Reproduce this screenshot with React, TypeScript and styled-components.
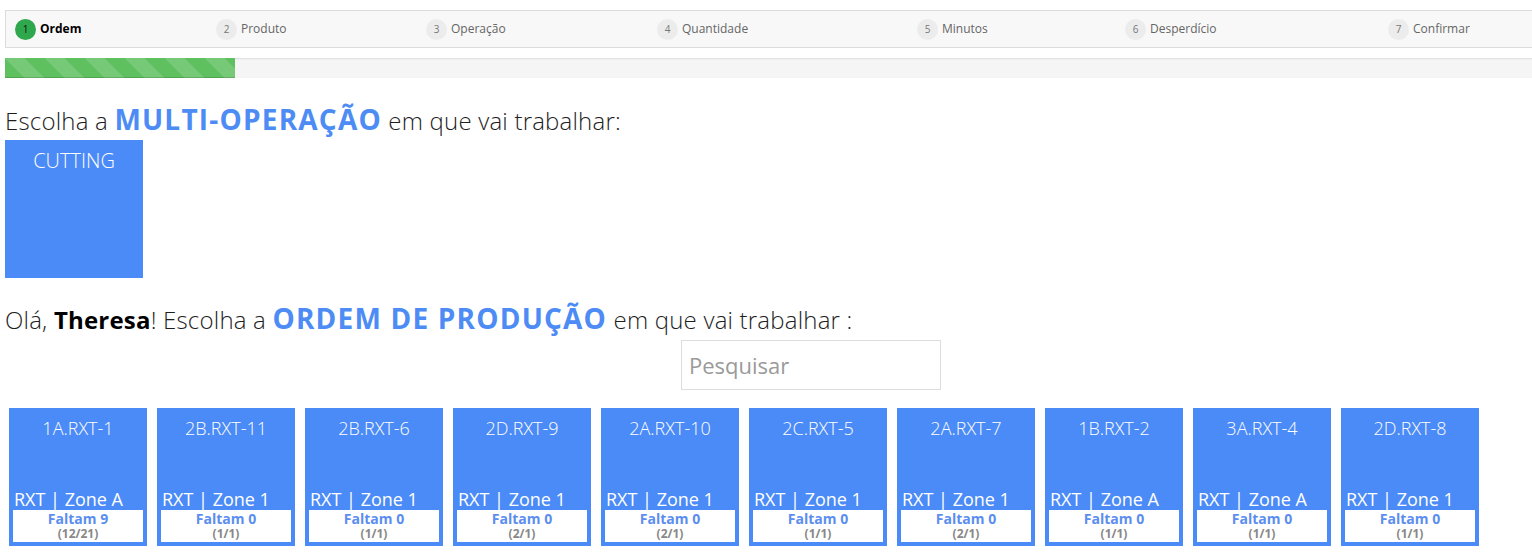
import React from "react";
import styled, { createGlobalStyle } from "styled-components";

const Global = createGlobalStyle`
  html, body {
    margin: 0;
    padding: 0;
    background: #fff;
    overflow: hidden;
  }
  body {
    font-family: "Open Sans", "Liberation Sans", sans-serif;
    color: #222;
  }
  * { box-sizing: border-box; }
`;

const Page = styled.div`
  padding: 10px 0 0 5px;
  width: 1532px;
`;

const StepBar = styled.div`
  width: 1540px;
  height: 38px;
  background: #f8f8f8;
  border: 1px solid #dcdcdc;
  border-right: none;
  display: grid;
  grid-template-columns: 201px 210px 231px 260px 208px 263px 1fr;
  align-items: center;
  padding-left: 9px;
`;

const Step = styled.div`
  display: flex;
  align-items: center;
  gap: 4px;
`;

const StepNum = styled.span<{ $active?: boolean }>`
  width: 21px;
  height: 21px;
  border-radius: 50%;
  display: flex;
  align-items: center;
  justify-content: center;
  font-size: 10px;
  background: ${(p) => (p.$active ? "#2fa84d" : "#ececec")};
  color: ${(p) => (p.$active ? "#111" : "#777")};
`;

const StepLabel = styled.span<{ $active?: boolean }>`
  font-size: 12px;
  margin-top: -1px;
  color: ${(p) => (p.$active ? "#000" : "#666")};
  font-weight: ${(p) => (p.$active ? 700 : 400)};
`;

const Progress = styled.div`
  margin-top: 10px;
  height: 20px;
  width: 1540px;
  background: #f5f5f5;
  box-shadow: inset 0 1px 2px rgba(0, 0, 0, 0.1);
`;

const ProgressFill = styled.div`
  height: 100%;
  background-color: #5ec05e;
  background-image: linear-gradient(
    45deg,
    rgba(255, 255, 255, 0.15) 25%,
    transparent 25%,
    transparent 50%,
    rgba(255, 255, 255, 0.15) 50%,
    rgba(255, 255, 255, 0.15) 75%,
    transparent 75%,
    transparent
  );
  background-size: 40px 40px;
  box-shadow: inset 0 -1px 0 rgba(0, 0, 0, 0.15);
`;

const Heading = styled.h3<{ $top: number; $bottom: number }>`
  margin: ${(p) => p.$top}px 0 ${(p) => p.$bottom}px;
  font-size: 24px;
  font-weight: 300;
  line-height: 30px;
  height: 30px;
  letter-spacing: 0.2px;
  color: #1e1e1e;
  white-space: nowrap;
`;

const Accent = styled.span`
  font-weight: 700;
  color: #4d8bf5;
  font-size: 28px;
  letter-spacing: 1.2px;
  line-height: 1;
`;

const Name = styled.span`
  font-weight: 700;
  color: #000;
`;

const Tile = styled.button`
  width: 138px;
  height: 138px;
  border: none;
  margin: 0;
  background: #4b8bf7;
  color: #fff;
  font-family: inherit;
  font-size: 20px;
  font-weight: 300;
  line-height: 28px;
  padding: 7px 0 0;
  display: flex;
  justify-content: center;
  align-items: flex-start;
`;

const SearchRow = styled.div`
  padding-left: 676px;
`;

const Search = styled.input`
  display: block;
  width: 260px;
  height: 50px;
  border: 1px solid #dddddd;
  padding: 0 7px;
  font-family: inherit;
  font-size: 22px;
  color: #333;
  outline: none;
  &::placeholder {
    color: #9a9a9a;
  }
`;

const Cards = styled.div`
  margin-top: 18px;
  padding-left: 4px;
  display: flex;
  gap: 10px;
`;

const Card = styled.div`
  width: 138px;
  height: 138px;
  padding: 4px;
  background: #4b8bf7;
  color: #fff;
  display: flex;
  flex-direction: column;
`;

const CardTitle = styled.div`
  margin-top: 4px;
  font-size: 18px;
  font-weight: 300;
  line-height: 24px;
  text-align: center;
`;

const Spacer = styled.div`
  flex: 1;
`;

const Zone = styled.div`
  font-size: 18px;
  line-height: 22px;
  padding-left: 1px;
  white-space: nowrap;
`;

const Count = styled.div`
  background: #fff;
  height: 32px;
  padding-top: 1px;
  text-align: center;
`;

const Faltam = styled.div`
  font-size: 14px;
  font-weight: 700;
  line-height: 16px;
  color: #5b8ef0;
`;

const Ratio = styled.div`
  font-size: 12px;
  font-weight: 700;
  line-height: 13px;
  color: #888;
`;

const steps = [
  "Ordem",
  "Produto",
  "Operação",
  "Quantidade",
  "Minutos",
  "Desperdício",
  "Confirmar",
];

const orders = [
  { code: "1A.RXT-1", zone: "RXT | Zone A", left: 9, ratio: "12/21" },
  { code: "2B.RXT-11", zone: "RXT | Zone 1", left: 0, ratio: "1/1" },
  { code: "2B.RXT-6", zone: "RXT | Zone 1", left: 0, ratio: "1/1" },
  { code: "2D.RXT-9", zone: "RXT | Zone 1", left: 0, ratio: "2/1" },
  { code: "2A.RXT-10", zone: "RXT | Zone 1", left: 0, ratio: "2/1" },
  { code: "2C.RXT-5", zone: "RXT | Zone 1", left: 0, ratio: "1/1" },
  { code: "2A.RXT-7", zone: "RXT | Zone 1", left: 0, ratio: "2/1" },
  { code: "1B.RXT-2", zone: "RXT | Zone A", left: 0, ratio: "1/1" },
  { code: "3A.RXT-4", zone: "RXT | Zone A", left: 0, ratio: "1/1" },
  { code: "2D.RXT-8", zone: "RXT | Zone 1", left: 0, ratio: "1/1" },
];

export default function App() {
  return (
    <Page>
      <Global />
      <StepBar>
        {steps.map((s, i) => (
          <Step key={s}>
            <StepNum $active={i === 0}>{i + 1}</StepNum>
            <StepLabel $active={i === 0}>{s}</StepLabel>
          </Step>
        ))}
      </StepBar>
      <Progress>
        <ProgressFill style={{ width: "230px" }} />
      </Progress>

      <Heading $top={27} $bottom={5}>
        Escolha a <Accent>MULTI-OPERAÇÃO</Accent> em que vai trabalhar:
      </Heading>
      <Tile>CUTTING</Tile>

      <Heading $top={26} $bottom={6}>
        Olá, <Name>Theresa</Name>! Escolha a <Accent>ORDEM DE PRODUÇÃO</Accent> em que vai trabalhar :
      </Heading>
      <SearchRow>
        <Search placeholder="Pesquisar" />
      </SearchRow>

      <Cards>
        {orders.map((o) => (
          <Card key={o.code}>
            <CardTitle>{o.code}</CardTitle>
            <Spacer />
            <Zone>{o.zone}</Zone>
            <Count>
              <Faltam>Faltam {o.left}</Faltam>
              <Ratio>({o.ratio})</Ratio>
            </Count>
          </Card>
        ))}
      </Cards>
    </Page>
  );
}
